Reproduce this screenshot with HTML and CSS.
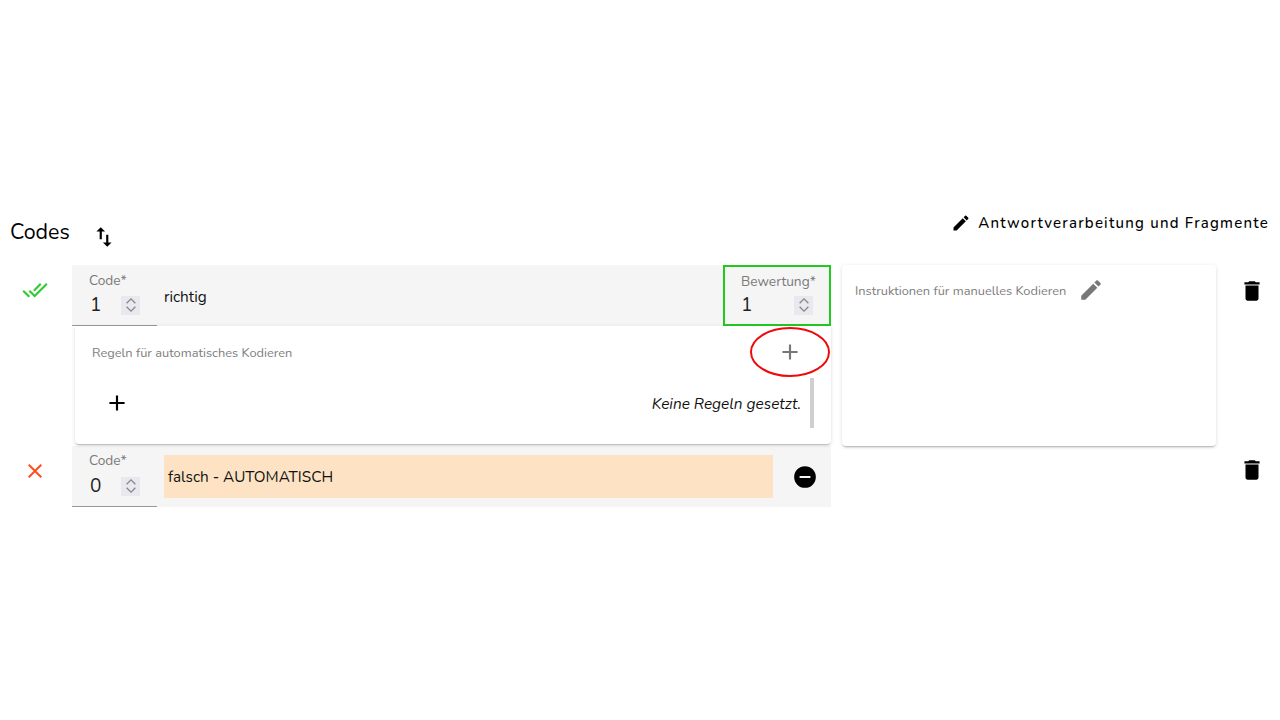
FILE: index.html
```html
<!DOCTYPE html>
<html lang="de">
<head>
<meta charset="utf-8">
<title>Codes</title>
<link rel="stylesheet" href="styles.css">
</head>
<body>
<main class="page">
  <header class="head">
    <h2 class="title">Codes</h2>
    <svg class="sort" viewBox="0 0 24 24" width="26" height="26"><path d="M16 17.010V10h-2v7.010h-3L15 21l4-3.990h-3zM9 3L5 6.990h3V14h2V6.990h3L9 3z"/></svg>
    <button class="proc">
      <svg viewBox="0 0 24 24" width="20" height="20"><path d="M3 17.250V21h3.750L17.810 9.940l-3.750-3.750L3 17.250zM20.710 7.040a1 1 0 0 0 0-1.410l-2.340-2.340a1 1 0 0 0-1.410 0l-1.830 1.830 3.750 3.750 1.830-1.830z"/></svg>
      <span>Antwortverarbeitung und Fragmente</span>
    </button>
  </header>

  <section class="code-row first">
    <div class="status">
      <svg class="check" viewBox="0 0 24 24" width="26" height="26"><path d="M18 7l-1.410-1.410-6.340 6.340 1.410 1.410L18 7zm4.240-1.410L11.660 16.170 7.480 12l-1.410 1.410L11.660 19l12-12-1.420-1.410zM.41 13.410L6 19l1.410-1.410L1.830 12 .41 13.410z"/></svg>
    </div>
    <div class="main">
      <div class="bar">
        <div class="field code">
          <label>Code*</label>
          <div class="val"><span>1</span><i class="spin"><svg viewBox="0 0 16 20" width="16" height="20"><path d="M3 8l5-5 5 5M3 12l5 5 5-5"/></svg></i></div>
        </div>
        <div class="text">richtig</div>
        <div class="field score">
          <label>Bewertung*</label>
          <div class="val"><span>1</span><i class="spin"><svg viewBox="0 0 16 20" width="16" height="20"><path d="M3 8l5-5 5 5M3 12l5 5 5-5"/></svg></i></div>
        </div>
      </div>
      <div class="rules">
        <div class="rules-head">
          <span class="muted">Regeln für automatisches Kodieren</span>
          <span class="add-wrap">
            <svg class="add-grey" viewBox="0 0 24 24" width="26" height="26"><path d="M19 13h-6v6h-2v-6H5v-2h6V5h2v6h6v2z"/></svg>
            <svg class="ring" viewBox="0 0 80 50" width="80" height="50"><ellipse cx="40" cy="25" rx="39" ry="24"/></svg>
          </span>
        </div>
        <div class="rules-body">
          <svg class="add-black" viewBox="0 0 24 24" width="26" height="26"><path d="M19 13h-6v6h-2v-6H5v-2h6V5h2v6h6v2z"/></svg>
          <em>Keine Regeln gesetzt.</em>
          <div class="scroll"></div>
        </div>
      </div>
    </div>
    <aside class="manual">
      <span class="muted">Instruktionen für manuelles Kodieren</span>
      <svg class="edit" viewBox="0 0 24 24" width="26" height="26"><path d="M3 17.250V21h3.750L17.810 9.940l-3.750-3.750L3 17.250zM20.710 7.040a1 1 0 0 0 0-1.410l-2.340-2.340a1 1 0 0 0-1.410 0l-1.830 1.830 3.750 3.750 1.830-1.830z"/></svg>
    </aside>
    <div class="trash">
      <svg viewBox="0 0 24 24" width="26" height="26"><path d="M6 19c0 1.100.9 2 2 2h8c1.100 0 2-.9 2-2V7H6v12zM19 4h-3.500l-1-1h-5l-1 1H5v2h14V4z"/></svg>
    </div>
  </section>

  <section class="code-row second">
    <div class="status">
      <svg class="cross" viewBox="0 0 24 24" width="24" height="24"><path d="M19 6.410L17.590 5 12 10.590 6.410 5 5 6.410 10.590 12 5 17.590 6.410 19 12 13.410 17.590 19 19 17.590 13.410 12z"/></svg>
    </div>
    <div class="main">
      <div class="bar short">
        <div class="field code">
          <label>Code*</label>
          <div class="val"><span>0</span><i class="spin"><svg viewBox="0 0 16 20" width="16" height="20"><path d="M3 8l5-5 5 5M3 12l5 5 5-5"/></svg></i></div>
        </div>
        <div class="auto">falsch - AUTOMATISCH</div>
        <svg class="minus" viewBox="0 0 24 24" width="26" height="26"><path d="M12 2a10 10 0 1 0 0 20 10 10 0 0 0 0-20zm5 11H7v-2h10v2z"/></svg>
      </div>
    </div>
    <div class="spacer"></div>
    <div class="trash low">
      <svg viewBox="0 0 24 24" width="26" height="26"><path d="M6 19c0 1.100.9 2 2 2h8c1.100 0 2-.9 2-2V7H6v12zM19 4h-3.500l-1-1h-5l-1 1H5v2h14V4z"/></svg>
    </div>
  </section>
</main>
</body>
</html>
```
FILE: styles.css
```css
* { box-sizing: border-box; }
html, body { margin: 0; background: #fff; }
body { font-family: "Nunito", "Lato", "Open Sans", sans-serif; color: #000; height: 720px; overflow: hidden; }
.page { padding-top: 210px; }

.head { display: flex; align-items: flex-start; height: 55px; padding: 0 11px 0 10px; }
.title { margin: 8px 0 0; font-size: 21.4px; font-weight: 400; line-height: 28px; }
.sort { margin: 14px 0 0 21px; }
.proc { margin-left: auto; display: flex; align-items: center; gap: 7px; height: 26px; background: none; border: 0; padding: 0; font: inherit; font-size: 15px; font-weight: 500; letter-spacing: 1.22px; color: #000; }

.code-row { display: grid; grid-template-columns: 72px 759px 374px 64px; align-items: start; }
.status { display: flex; justify-content: center; padding-right: 2px; }
.first .status { padding-top: 12px; }
.second .status { padding-top: 13px; }
.check { fill: #2ecc2e; }
.cross { fill: #ff4d1c; }

.bar { display: flex; align-items: stretch; height: 61px; background: #f5f5f5; }
.bar.short { align-items: flex-start; }
.field { display: flex; flex-direction: column; }
.field label { font-size: 13.7px; line-height: 16px; color: #7a7a7a; white-space: nowrap; }
.val { display: flex; align-items: center; justify-content: space-between; margin-top: 5px; font-size: 19px; line-height: 20px; color: #222; }
.spin { display: flex; width: 19px; height: 19px; align-items: center; justify-content: center; background: #e8e8ee; }
.spin svg { width: 14px; height: 18px; fill: none; stroke: #888; stroke-width: 1.5; }
.code { width: 85px; height: 61px; padding: 8px 17px 0 17px; border-bottom: 1.5px solid #999; }
.code .val { margin-top: 6px; }
.code .val span { margin-left: 1px; }
.text { margin: 23px 0 0 7px; flex: 1; font-size: 15.3px; line-height: 18px; color: #111; }
.score { width: 108px; height: 61px; padding: 7px 16px 0 16px; border: 2px solid #22c91f; }

.rules { position: relative; margin-left: 3px; height: 118px; background: #fff; border-radius: 0 0 4px 4px; box-shadow: 0 2px 2px -1px rgba(0,0,0,.25), 0 1px 4px rgba(0,0,0,.12); padding: 0 17px; }
.rules-head { display: flex; justify-content: space-between; align-items: center; height: 52px; padding-top: 2px; }
.muted { font-size: 12.8px; line-height: 16px; color: #7d7d7d; }
.add-wrap { position: relative; display: flex; margin: 0 11.5px 2px 0; width: 26px; height: 26px; }
.add-grey { fill: #777; }
.ring { position: absolute; left: -26.5px; top: -12px; fill: none; stroke: #ee0a0a; stroke-width: 2; }
.rules-body { position: relative; display: flex; align-items: center; justify-content: space-between; height: 50px; padding: 0 13px 0 12px; }
.rules-body em { font-size: 15.4px; color: #111; }
.scroll { position: absolute; right: 0; top: 0; width: 4px; height: 50px; background: #cfcfcf; }
.add-black { fill: #000; }

.manual { display: flex; align-items: flex-start; gap: 12px; margin-left: 11px; width: 374px; height: 181px; padding: 12px 13px; background: #fff; border-radius: 4px; box-shadow: 0 2px 2px -1px rgba(0,0,0,.25), 0 1px 4px rgba(0,0,0,.12); }
.manual .muted { margin-top: 6px; }
.edit { fill: #777; }
.spacer { width: 374px; }
.trash { display: flex; justify-content: center; padding: 13px 0 0 18px; margin-left: 11px; }
.trash.low { padding-top: 11px; }

.short .code { padding-top: 7px; }
.short .code .val { margin-top: 7px; }
.auto { margin: 9px 0 0 7px; width: 609px; height: 43px; padding: 0 4px; background: #fde3c3; font-size: 15.3px; line-height: 44px; color: #111; }
.minus { margin: 18px 0 0 19px; fill: #000; }
```
